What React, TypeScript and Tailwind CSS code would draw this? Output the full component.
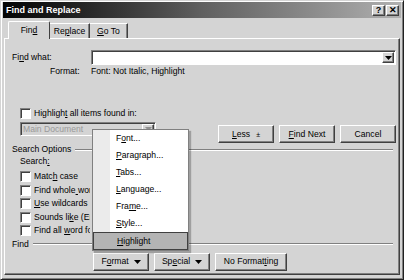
import React from 'react';

const raised =
  'border border-t-white border-l-white border-r-[#404040] border-b-[#404040] shadow-[inset_-1px_-1px_0_#808080]';
const sunken =
  'border border-t-[#808080] border-l-[#808080] border-r-white border-b-white shadow-[inset_1px_1px_0_#404040]';

// Text with one underlined mnemonic letter
const Mn = ({ text, at }: { text: string; at: number }) => (
  <span>
    {text.slice(0, at)}
    <span className="underline underline-offset-1">{text[at]}</span>
    {text.slice(at + 1)}
  </span>
);

const Check = ({ children, clip = false }: { children: React.ReactNode; clip?: boolean }) => (
  <div className="flex items-center h-[13.5px] pl-[15px]">
    <div className={`w-[11px] h-[11px] bg-white ${sunken}`} />
    {/* the Format menu covers the rest of these labels */}
    <div className={`ml-[3px] whitespace-nowrap ${clip ? 'w-[56px] overflow-hidden' : ''}`}>{children}</div>
  </div>
);

const Button = ({ children, className = '' }: { children: React.ReactNode; className?: string }) => (
  <div className={`h-[18px] flex items-center justify-center bg-[#d4d4d4] ${raised} ${className}`}>
    {children}
  </div>
);

const Arrow = () => (
  <svg width="7" height="4" viewBox="0 0 7 4" className="ml-[5px]">
    <path d="M0 0h7L3.5 4z" fill="#000" />
  </svg>
);

const GroupLine = ({ label }: { label: string }) => (
  <div className="flex items-center h-[11px] pl-[7px] pr-[3px]">
    <span className="whitespace-nowrap">{label}</span>
    <div className="flex-1 ml-[4px] h-[2px] border-t border-t-[#808080] border-b border-b-white" />
  </div>
);

const menuItems: { text: string; at: number }[] = [
  { text: 'Font...', at: 1 },
  { text: 'Paragraph...', at: 0 },
  { text: 'Tabs...', at: 0 },
  { text: 'Language...', at: 0 },
  { text: 'Frame...', at: 3 },
  { text: 'Style...', at: 0 },
];

export default function App() {
  return (
    <div className="relative w-[404px] h-[280px] bg-[#d4d4d4] border border-t-[#d4d4d4] border-l-[#d4d4d4] border-r-[#202020] border-b-[#202020] shadow-[inset_1px_1px_0_#fff,inset_-1px_-1px_0_#808080] font-['Liberation_Sans',Arial,sans-serif] text-[8.6px] text-black leading-none overflow-hidden">
      {/* Title bar */}
      <div className="mx-[2px] mt-[1px] h-[16px] flex items-center justify-between pl-[3px] pr-[2px] bg-gradient-to-r from-[#050505] via-[#606060] to-[#b0b0b0]">
        <span className="text-white font-bold text-[9px]">Find and Replace</span>
        <div className="flex gap-[1px]">
          <div className={`w-[13px] h-[11px] flex items-center justify-center bg-[#d4d4d4] font-bold text-[9px] ${raised}`}>?</div>
          <div className={`w-[13px] h-[11px] flex items-center justify-center bg-[#d4d4d4] font-bold text-[9px] ${raised}`}>✕</div>
        </div>
      </div>

      {/* Tabs */}
      <div className="flex items-end h-[18px] mt-[2px] pl-[7px] relative z-10">
        <div className="w-[42px] h-[18px] flex items-center justify-center bg-[#d4d4d4] border border-t-white border-l-white border-r-[#404040] border-b-0 rounded-t-[2px] -mb-px">
          <Mn text="Find" at={3} />
        </div>
        <div className="w-[40px] h-[15px] flex items-center justify-center border border-t-white border-l-0 border-r-[#404040] border-b-0 shadow-[inset_-1px_0_0_#808080]">
          <Mn text="Replace" at={2} />
        </div>
        <div className="w-[38px] h-[15px] flex items-center justify-center border border-t-white border-l-0 border-r-[#404040] border-b-0 shadow-[inset_-1px_0_0_#808080]">
          <Mn text="Go To" at={0} />
        </div>
      </div>

      {/* Tab panel */}
      <div className="mx-[3px] h-[237px] border border-t-white border-l-white border-r-[#404040] border-b-[#404040] shadow-[inset_-1px_-1px_0_#808080] flex flex-col pr-[3px]">
        <div className="flex items-center h-[15px] mt-[11px] pl-[7px]">
          <div className="w-[79px]"><Mn text="Find what:" at={2} /></div>
          <div className={`flex-1 h-[15px] bg-white flex justify-end items-center pr-[1px] ${sunken}`}>
            <div className={`w-[12px] h-[11px] flex items-center justify-center bg-[#d4d4d4] ${raised}`}>
              <svg width="7" height="4" viewBox="0 0 7 4"><path d="M0 0h7L3.5 4z" fill="#000" /></svg>
            </div>
          </div>
        </div>
        <div className="flex items-center h-[11px] mt-[1px] pl-[7px]">
          <div className="w-[79px] pl-[38px]">Format:</div>
          <div>Font: Not Italic, Highlight</div>
        </div>

        <div className="mt-[30px] h-[12px] flex items-center">
          <Check><Mn text="Highlight all items found in:" at={8} /></Check>
        </div>

        <div className="flex items-start h-[22px] mt-[2px]">
          <div className={`ml-[15px] mt-[1px] w-[136px] h-[14px] bg-[#d4d4d4] flex items-center justify-between pl-[2px] pr-[1px] text-[#9a9a9a] ${sunken}`}>
            <span>Main Document</span>
            <div className={`w-[12px] h-[10px] flex items-center justify-center bg-[#d4d4d4] ${raised}`}>
              <svg width="7" height="4" viewBox="0 0 7 4"><path d="M0 0h7L3.5 4z" fill="#909090" /></svg>
            </div>
          </div>
          <div className="ml-auto mt-[4px] flex gap-[5px]">
            <Button className="w-[56px]"><Mn text="Less" at={0} /><span className="ml-[6px] text-[7px]">±</span></Button>
            <Button className="w-[56px]"><Mn text="Find Next" at={0} /></Button>
            <Button className="w-[56px]">Cancel</Button>
          </div>
        </div>

        <div className="mt-[1px]">
          <GroupLine label="Search Options" />
        </div>
        <div className="h-[11px] mt-[1px] pl-[15px] flex items-center">
          <Mn text="Search:" at={6} />
        </div>
        <div className="mt-[3px]">
          <Check clip><Mn text="Match case" at={4} /></Check>
          <Check clip><Mn text="Find whole words only" at={10} /></Check>
          <Check clip><Mn text="Use wildcards" at={0} /></Check>
          <Check clip><Mn text="Sounds like (English)" at={9} /></Check>
          <Check clip><Mn text="Find all word forms (English)" at={9} /></Check>
        </div>
        <div className="mt-[1px]">
          <GroupLine label="Find" />
        </div>
        <div className="flex mt-[3px] pl-[88px] gap-[5px]">
          <Button className="w-[56px] border-t-[#404040] border-l-[#404040]">
            <Mn text="Format" at={1} /><Arrow />
          </Button>
          <Button className="w-[56px]">
            <Mn text="Special" at={2} /><Arrow />
          </Button>
          <Button className="w-[72px]">
            <Mn text="No Formatting" at={9} />
          </Button>
        </div>
      </div>

      {/* Format menu */}
      <div className="absolute left-[91px] top-[128px] w-[97px] bg-white border border-[#808080] shadow-[2px_2px_1px_rgba(0,0,0,0.25)] z-20">
        {menuItems.map((m) => (
          <div key={m.text} className="flex h-[17px]">
            <div className="w-[17px] bg-[#ebebeb]" />
            <div className="flex items-center pl-[6px]"><Mn text={m.text} at={m.at} /></div>
          </div>
        ))}
        <div className="flex items-center h-[18px] bg-[#b4b4b4] border border-[#404040] pl-[23px]">
          <Mn text="Highlight" at={0} />
        </div>
      </div>
    </div>
  );
}
